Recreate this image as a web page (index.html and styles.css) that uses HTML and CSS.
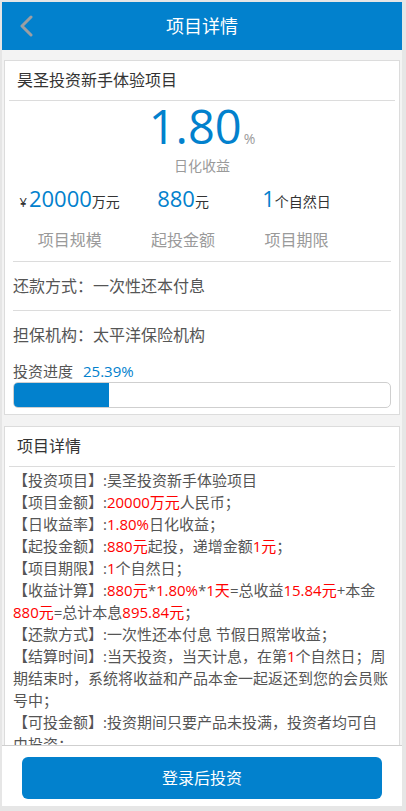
FILE: index.html
```html
<!DOCTYPE html>
<html lang="zh-CN">

<head>
    <meta charset="UTF-8">
    <meta name="viewport" content="width=device-width, initial-scale=1.0">
    <title>项目详情</title>
    <link rel="stylesheet" href="styles.css">
</head>

<body>
    <div class="app">
        <header class="top-bar">
            <a class="back-btn" href="#">
                <svg class="back-icon" viewBox="0 0 14 22" fill="none" stroke="currentColor">
                    <polyline stroke-width="3" stroke-linecap="round" stroke-linejoin="round"
                        points="12,2 3,11 12,20" />
                </svg>
            </a>
            <div class="top-title">项目详情</div>
        </header>

        <main class="content">
            <section class="card">
                <div class="card-title">昊圣投资新手体验项目</div>
                <div class="card-body">
                    <div class="rate"><span class="rate-num">1.80</span><span class="rate-unit">%</span></div>
                    <div class="rate-label">日化收益</div>

                    <div class="stats">
                        <div class="stat-value"><span class="yen">¥</span><span class="num">20000</span><span class="unit">万元</span></div>
                        <div class="stat-value"><span class="num">880</span><span class="unit">元</span></div>
                        <div class="stat-value"><span class="num">1</span><span class="unit">个自然日</span></div>
                        <div class="stat-label">项目规模</div>
                        <div class="stat-label">起投金额</div>
                        <div class="stat-label">项目期限</div>
                    </div>

                    <div class="info-row bordered">还款方式：一次性还本付息</div>
                    <div class="info-row">担保机构：太平洋保险机构</div>

                    <div class="progress-label">投资进度<span class="progress-val">25.39%</span></div>
                    <div class="progress">
                        <div class="progress-bar" style="width: 25.39%"></div>
                    </div>
                </div>
            </section>

            <section class="card">
                <div class="card-title">项目详情</div>
                <div class="detail">
                    <p>【投资项目】:昊圣投资新手体验项目</p>
                    <p>【项目金额】:<span class="red">20000万元</span>人民币；</p>
                    <p>【日收益率】:<span class="red">1.80%</span>日化收益；</p>
                    <p>【起投金额】:<span class="red">880元</span>起投，递增金额<span class="red">1元</span>；</p>
                    <p>【项目期限】:<span class="red">1</span>个自然日；</p>
                    <p>【收益计算】:<span class="red">880元</span>*<span class="red">1.80%</span>*<span class="red">1天</span>=总收益<span class="red">15.84元</span>+本金<span class="red">880元</span>=总计本息<span class="red">895.84元</span>；</p>
                    <p>【还款方式】:一次性还本付息 节假日照常收益；</p>
                    <p>【结算时间】:当天投资，当天计息，在第<span class="red">1</span>个自然日；周期结束时，系统将收益和产品本金一起返还到您的会员账号中；</p>
                    <p>【可投金额】:投资期间只要产品未投满，投资者均可自由投资；</p>
                    <p>【风险提示】:市场有风险，投资需谨慎。</p>
                </div>
            </section>
        </main>

        <footer class="bottom-bar">
            <a class="invest-btn" href="#">登录后投资</a>
        </footer>
    </div>
</body>

</html>
```

FILE: styles.css
```css
body {
    margin: 0;
    background: #e6e6e6;
    font-family: "Open Sans", "Noto Sans CJK SC", sans-serif;
    color: #555;
}

.app {
    margin: 2px 4px 5px 2px;
    height: 804px;
    display: flex;
    flex-direction: column;
    background: #f3f3f3;
    overflow: hidden;
}

/* top bar */
.top-bar {
    height: 48px;
    flex-shrink: 0;
    display: grid;
    grid-template-columns: 48px 1fr 48px;
    align-items: center;
    background: #0281cd;
}

.back-btn {
    display: flex;
    align-items: center;
    padding-left: 17px;
    color: #9c9ea2;
}

.back-icon {
    width: 14px;
    height: 22px;
}

.top-title {
    text-align: center;
    color: #fff;
    font-size: 18px;
    line-height: 48px;
}

/* content */
.content {
    flex: 1;
    overflow: hidden;
    padding: 10px 2px 0;
}

.card {
    background: #fff;
    border: 1px solid #dcdcdc;
    margin-bottom: 11px;
}

.card-title {
    margin: 0 4px;
    padding-left: 8px;
    height: 39px;
    line-height: 39px;
    font-size: 16px;
    color: #333;
    border-bottom: 1px solid #dcdcdc;
}

.card-body {
    padding: 0 8px 6px;
}

.rate {
    text-align: center;
    line-height: 50px;
    height: 50px;
}

.rate-num {
    font-size: 47px;
    color: #0281cd;
}

.rate-unit {
    font-size: 14px;
    color: #9a9a9a;
    margin-left: 2px;
}

.rate-label {
    margin-top: 5px;
    text-align: center;
    font-size: 14px;
    line-height: 20px;
    color: #9a9a9a;
}

.stats {
    display: grid;
    grid-template-columns: repeat(3, 30%);
    row-gap: 12px;
    margin-top: 8px;
    padding-bottom: 9px;
    border-bottom: 1px solid #dcdcdc;
}

.stat-value {
    text-align: center;
    line-height: 28px;
    color: #333;
}

.stat-value .num {
    font-size: 22px;
    color: #0281cd;
}

.stat-value .unit {
    font-size: 14px;
}

.stat-value .yen {
    font-size: 13px;
    margin-right: 2px;
}

.stat-label {
    text-align: center;
    font-size: 16px;
    line-height: 24px;
    color: #9a9a9a;
}

.info-row {
    font-size: 16px;
    line-height: 48px;
    color: #555;
}

.info-row.bordered {
    border-bottom: 1px solid #dcdcdc;
}

.progress-label {
    margin-top: 2px;
    font-size: 15px;
    line-height: 20px;
    color: #555;
}

.progress-val {
    margin-left: 10px;
    color: #0281cd;
}

.progress {
    margin-top: 1px;
    height: 24px;
    border: 1px solid #cfcfcf;
    border-radius: 5px;
    overflow: hidden;
}

.progress-bar {
    height: 100%;
    background: #0281cd;
}

.detail {
    padding: 2px 8px 10px;
}

.detail p {
    margin: 0;
    font-size: 15px;
    line-height: 22px;
    color: #555;
}

.red {
    color: #ff0000;
}

/* bottom bar */
.bottom-bar {
    height: 61px;
    flex-shrink: 0;
    background: #fff;
    border-top: 1px solid #cfcfcf;
    padding: 11px 20px 0;
    box-sizing: border-box;
}

.invest-btn {
    display: block;
    height: 42px;
    line-height: 42px;
    border-radius: 6px;
    background: #0281cd;
    color: #fff;
    font-size: 16px;
    text-align: center;
    text-decoration: none;
}
```
